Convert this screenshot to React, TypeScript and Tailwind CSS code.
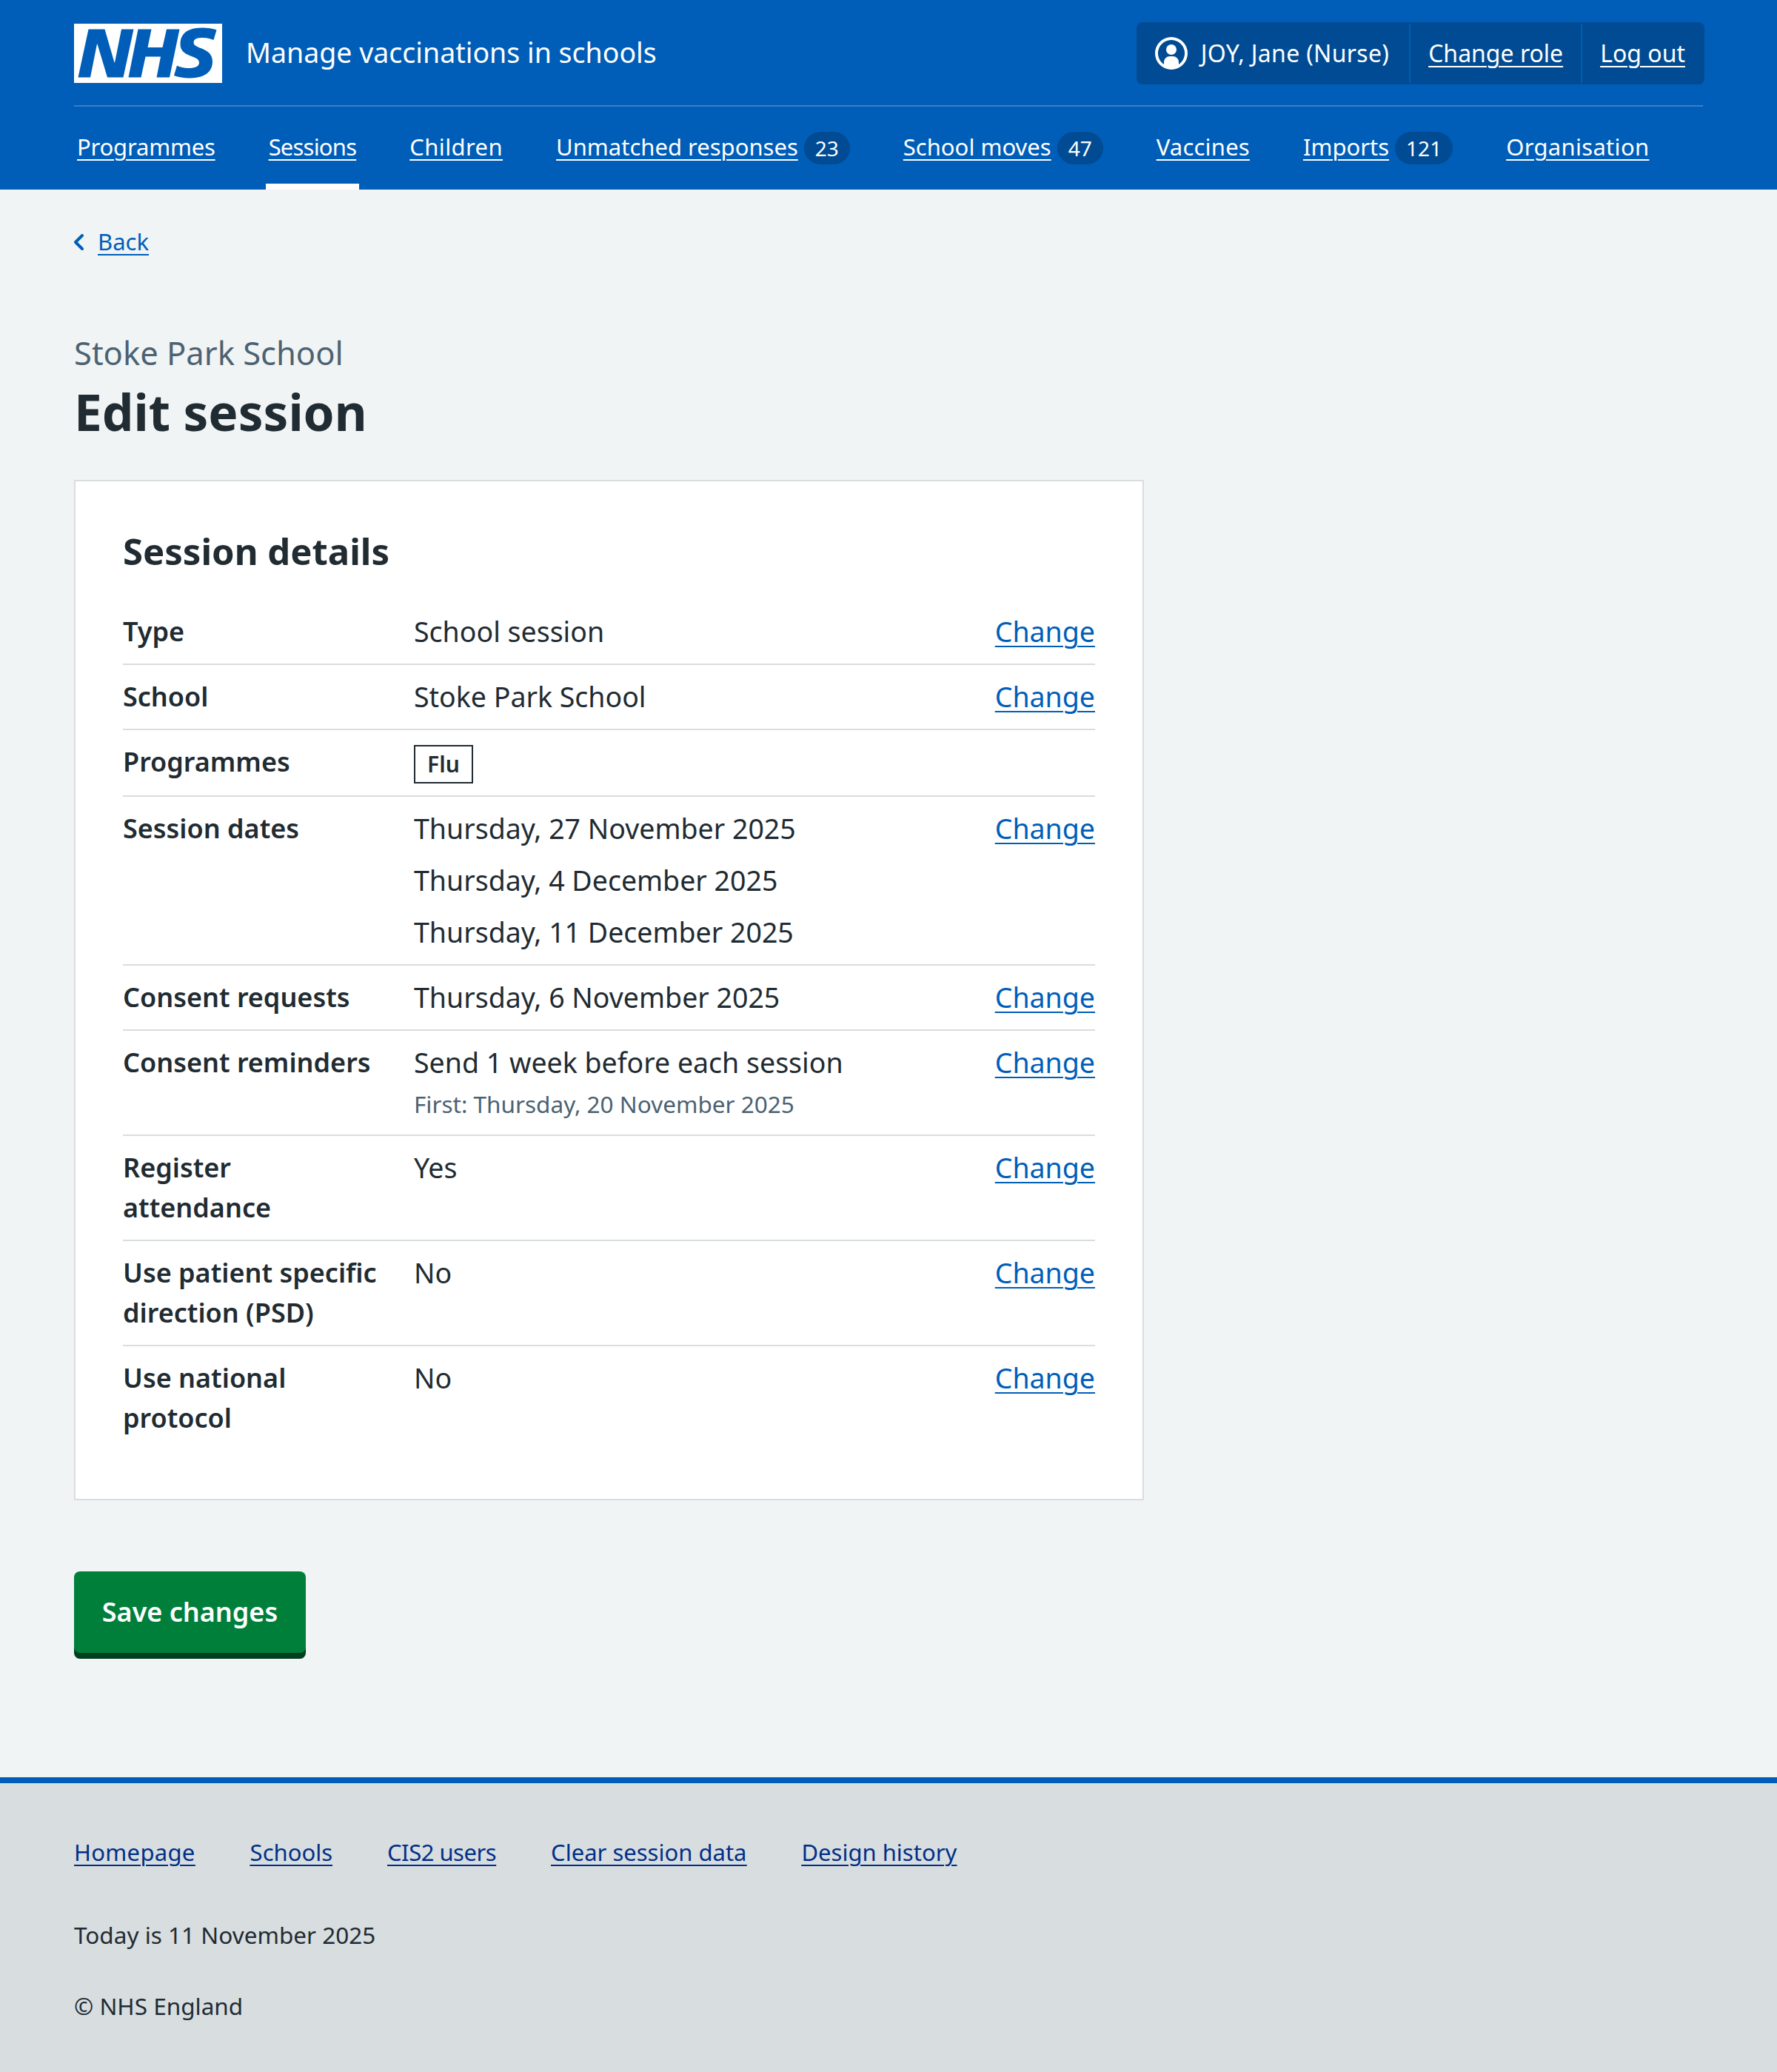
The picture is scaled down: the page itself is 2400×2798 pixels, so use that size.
const font = "[font-family:'Noto_Sans',sans-serif]";
const link = "underline decoration-2 underline-offset-[5px]";

function Nav({ label, badge, active, track = "" }: { label: string; badge?: string; active?: boolean; track?: string }) {
  return (
    <a className={`flex h-full items-center gap-2 px-1 text-[31px] leading-[48px] text-white ${active ? "border-b-8 border-white pb-[12px]" : "pb-[20px]"}`}>
      <span className={`${link} ${track}`}>{label}</span>
      {badge && <span className="mt-[4px] flex h-11 items-center rounded-full bg-[#004b93] px-[15px] text-[28px]">{badge}</span>}
    </a>
  );
}

function Row({ label, children, action = true }: { label: string; children: React.ReactNode; action?: boolean }) {
  return (
    <div className="flex border-b-2 border-[#d8dde0] py-4 last:border-b-0">
      <div className="w-[393px] shrink-0 pr-[44px] text-[36px] font-semibold">{label}</div>
      <div className="flex-1">{children}</div>
      {action && <a className={`text-[#005eb8] ${link}`}>Change</a>}
    </div>
  );
}

export default function App() {
  return (
    <div className={`${font} min-h-[2798px] bg-[#f0f4f5] text-[#212b32]`}>
      <header className="h-[256px] bg-[#005eb8] px-[100px]">
        <div className="flex h-[144px] items-center justify-between border-b-2 border-[#3d7ec6] pt-[2px]">
          <div className="flex items-center gap-8">
            <svg viewBox="0 0 40 16" className="h-[80px] w-[200px]">
              <path fill="#fff" d="M0 0h40v16H0z" />
              <path fill="#005eb8" d="M3.9 1.5h4.4l2.6 9h.1l1.8-9h3.3l-2.8 13H9l-2.7-9h-.1l-1.8 9H1.1M17.3 1.5h3.6l-1 4.9h4L25 1.5h3.5l-2.7 13h-3.5l1.1-5.6h-4.1l-1.2 5.6h-3.4M37.7 4.4c-.7-.3-1.6-.6-2.9-.6-1.4 0-2.5.2-2.5 1.3 0 1.8 5.1 1.2 5.1 5.1 0 3.6-3.3 4.5-6.4 4.5-1.3 0-2.9-.3-4-.7l.8-2.7c.7.4 2.1.7 3.2.7s2.8-.2 2.8-1.5c0-2.1-5.1-1.3-5.1-5 0-3.4 2.9-4.4 5.8-4.4 1.6 0 3.1.2 4 .6" />
            </svg>
            <span className="pb-[2px] text-[37.5px] text-white">Manage vaccinations in schools</span>
          </div>
          <div className="-mr-[2px] flex h-[84px] items-stretch rounded-lg bg-[#004b93] py-[2px] text-[32px] text-white">
            <div className="flex items-center gap-4 border-r-2 border-[#005eb8] pl-[25px] pr-[27px]">
              <svg viewBox="0 0 24 24" className="-ml-[2px] h-12 w-12" fill="#fff"><path d="M12 1a11 11 0 1 1 0 22 11 11 0 0 1 0-22Zm0 2a9 9 0 0 0-5 16.5V18a4 4 0 0 1 4-4h2a4 4 0 0 1 4 4v1.5A9 9 0 0 0 12 3Zm0 3a3.5 3.5 0 1 1-3.5 3.5A3.4 3.4 0 0 1 12 6Z" /></svg>
              <span className="tracking-[0.3px]">JOY, Jane (Nurse)</span>
            </div>
            <a className={`flex items-center border-r-2 border-[#005eb8] px-6 ${link}`}>Change role</a>
            <a className={`flex items-center pl-6 pr-[26px] ${link}`}>Log out</a>
          </div>
        </div>
        <nav className="flex h-[112px] items-stretch gap-16 pt-[16px]">
          <Nav label="Programmes" track="tracking-[-0.2px]" />
          <Nav label="Sessions" active track="tracking-[-0.8px]" />
          <Nav label="Children" track="tracking-[0.4px]" />
          <Nav label="Unmatched responses" badge="23" />
          <Nav label="School moves" badge="47" />
          <Nav label="Vaccines" track="tracking-[0.2px]" />
          <Nav label="Imports" badge="121" />
          <Nav label="Organisation" track="tracking-[0.3px]" />
        </nav>
      </header>

      <main className="h-[2144px] px-[100px]">
        <a className="flex items-center gap-4 pt-[46px] text-[31px] leading-[48px] text-[#005eb8]">
          <svg viewBox="2 0 16 24" className="mt-[2px] h-6 w-4" fill="none" stroke="#005eb8" strokeWidth="4" strokeLinecap="round" strokeLinejoin="round"><path d="M13 3 4 12l9 9" /></svg>
          <span className={link}>Back</span>
        </a>
        <div className="mt-[98px] text-[43.5px] leading-[56px] text-[#4c6272]">Stoke Park School</div>
        <h1 className="mt-[10px] text-[67.5px] font-bold leading-[84px]">Edit session</h1>
        <section className="mt-[50px] h-[1378px] w-[1445px] border-2 border-[#d8dde0] bg-white px-[64px] pt-[58px] text-[37.5px] leading-[54px]">
          <h2 className="mb-[30px] text-[49px] font-bold leading-[72px]">Session details</h2>
          <Row label="Type">School session</Row>
          <Row label="School">Stoke Park School</Row>
          <Row label="Programmes" action={false}>
            <span className="mt-[4px] flex h-[52px] w-fit items-center border-2 border-[#212b32] px-[16px] text-[30px] font-semibold">Flu</span>
          </Row>
          <Row label="Session dates">
            <div className="flex flex-col gap-4">
              <div>Thursday, 27 November 2025</div>
              <div>Thursday, 4 December 2025</div>
              <div>Thursday, 11 December 2025</div>
            </div>
          </Row>
          <Row label="Consent requests">Thursday, 6 November 2025</Row>
          <Row label="Consent reminders">
            <div>Send 1 week before each session</div>
            <div className="mt-[4px] text-[31.5px] leading-[50px] text-[#4c6272]">First: Thursday, 20 November 2025</div>
          </Row>
          <Row label="Register attendance">Yes</Row>
          <Row label="Use patient specific direction (PSD)">No</Row>
          <Row label="Use national protocol">No</Row>
        </section>
        <button className="mt-[96px] h-[110px] w-[313px] rounded-lg bg-[#007f3b] text-[36px] font-semibold text-white shadow-[0_8px_0_0_#00401e]">Save changes</button>
      </main>

      <footer className="h-[398px] border-t-8 border-[#005eb8] bg-[#d8dde0] px-[100px] pt-[69px] text-[31.5px] leading-[48px]">
        <div className={`flex gap-[74px] text-[31px] text-[#003087] ${link}`}>
          <a className="tracking-[0.3px]">Homepage</a><a>Schools</a><a className="tracking-[-0.5px]">CIS2 users</a><a>Clear session data</a><a>Design history</a>
        </div>
        <p className="mt-[64px]">Today is 11 November 2025</p>
        <p className="mt-[48px]">© NHS England</p>
      </footer>
    </div>
  );
}
